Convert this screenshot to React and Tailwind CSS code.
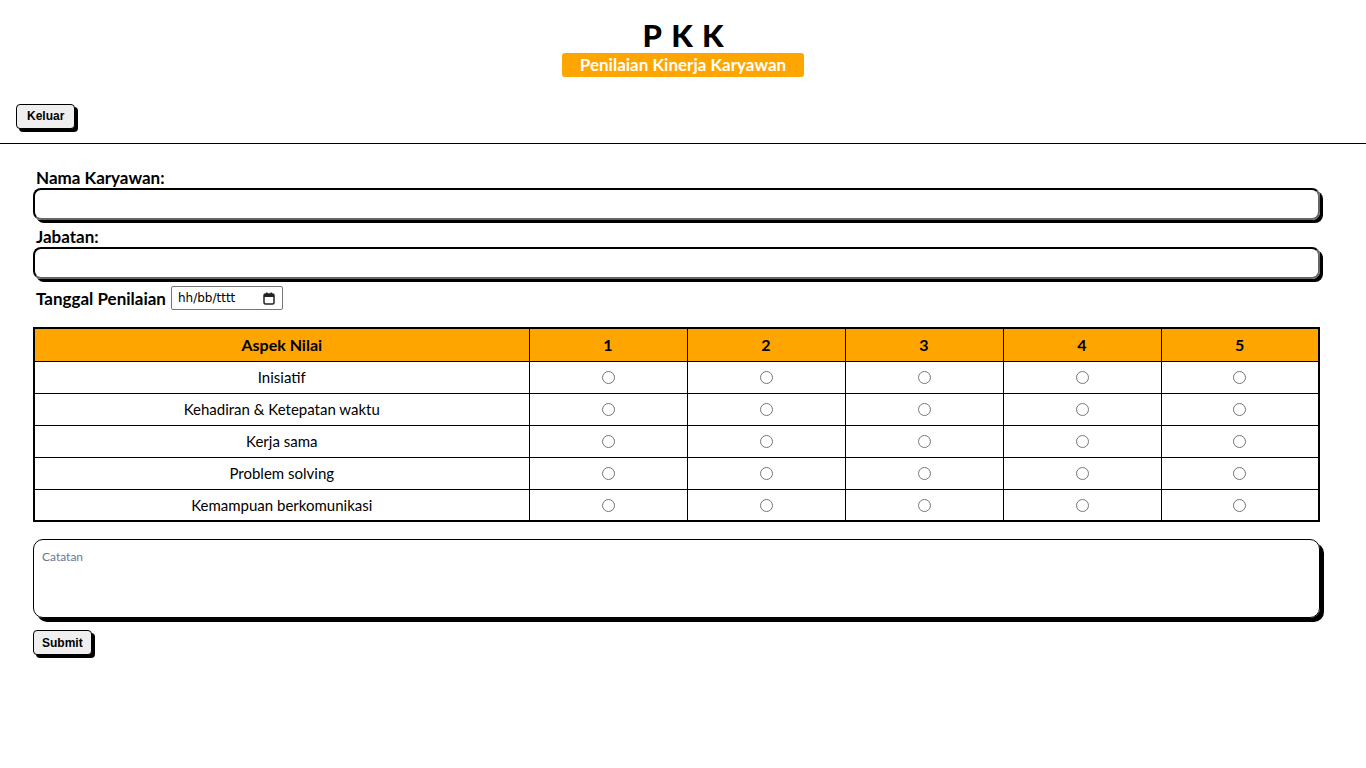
import React from 'react';

const ASPEK = [
  'Inisiatif',
  'Kehadiran & Ketepatan waktu',
  'Kerja sama',
  'Problem solving',
  'Kemampuan berkomunikasi',
];

const gill = { fontFamily: '"Lato", "Open Sans", sans-serif' };
const arial = { fontFamily: '"Liberation Sans", Arial, sans-serif' };

function Radio() {
  return <span className="inline-block w-[13px] h-[13px] rounded-full border border-[#767676] bg-white align-middle -mt-[3px]" />;
}

export default function App() {
  return (
    <div className="min-h-[768px] bg-white text-black" style={gill}>
      {/* Header */}
      <header className="flex flex-col items-center pt-[18px]">
        <h1 className="text-[31px] font-black leading-[34px] tracking-[0.3em] pl-[0.3em]">PKK</h1>
        <div className="mt-[1px] w-[242px] h-[24px] rounded-[3px] bg-[#ffa500] text-white text-[17px] font-bold flex items-center justify-center">
          Penilaian Kinerja Karyawan
        </div>
      </header>

      <div className="px-[16px] pt-[25px] pb-[14px]">
        <button className="h-[25px] px-[10px] rounded-[4px] border border-black bg-[#efefef] shadow-[3px_3px_0_#000] text-[12px] font-bold" style={arial}>
          Keluar
        </button>
      </div>
      <hr className="border-t border-black" />

      {/* Form */}
      <form className="px-[33px] pr-[46px] pt-[24px]" onSubmit={e => e.preventDefault()}>
        <label className="block pl-[3px] text-[17px] font-bold leading-[20px]">Nama Karyawan:</label>
        <div className="h-[32px] rounded-[8px] border-2 border-black border-b-[#666] border-r-[#666] shadow-[3px_3px_0_#000]" />
        <label className="block pl-[3px] mt-[7px] text-[17px] font-bold leading-[20px]">Jabatan:</label>
        <div className="h-[32px] rounded-[8px] border-2 border-black border-b-[#666] border-r-[#666] shadow-[3px_3px_0_#000]" />

        <div className="flex items-center gap-[5px] mt-[7px] pl-[3px]">
          <span className="text-[17px] font-bold">Tanggal Penilaian</span>
          <div className="w-[112px] h-[24px] border border-[#767676] rounded-[2px] flex items-center justify-between pl-[6px] pr-[7px] text-[12px]" style={{ fontFamily: '"DejaVu Sans", sans-serif' }}>
            <span>hh/bb/tttt</span>
            <svg width="12" height="13" viewBox="0 0 12 13">
              <rect x="1" y="2" width="10" height="10" rx="1.5" fill="none" stroke="#222" strokeWidth="1.5" />
              <rect x="1" y="2" width="10" height="3" fill="#222" />
              <rect x="3" y="0.5" width="1.5" height="2.5" fill="#222" />
              <rect x="7.5" y="0.5" width="1.5" height="2.5" fill="#222" />
            </svg>
          </div>
        </div>

        {/* Table */}
        <table className="w-full table-fixed mt-[16px] border-collapse border-2 border-black text-[15px]">
          <thead>
            <tr className="bg-[#ffa500] h-[33px]">
              <th className="border border-black w-[495px] text-[16px] font-bold">Aspek Nilai</th>
              {[1, 2, 3, 4, 5].map(n => (
                <th key={n} className="border border-black text-[16px] font-bold">{n}</th>
              ))}
            </tr>
          </thead>
          <tbody>
            {ASPEK.map(a => (
              <tr key={a} className="h-[32px]">
                <td className="border border-black text-center">{a}</td>
                {[1, 2, 3, 4, 5].map(n => (
                  <td key={n} className="border border-black text-center"><Radio /></td>
                ))}
              </tr>
            ))}
          </tbody>
        </table>

        <div className="mt-[17px] h-[79px] rounded-[10px] border border-black shadow-[4px_4px_0_#000] px-[8px] pt-[8px] text-[12px] text-[#6b7691]">
          Catatan
        </div>

        <button className="mt-[12px] h-[25px] px-[8px] rounded-[4px] border border-black bg-[#efefef] shadow-[3px_3px_0_#000] text-[12px] font-bold" style={arial}>
          Submit
        </button>
      </form>
    </div>
  );
}
